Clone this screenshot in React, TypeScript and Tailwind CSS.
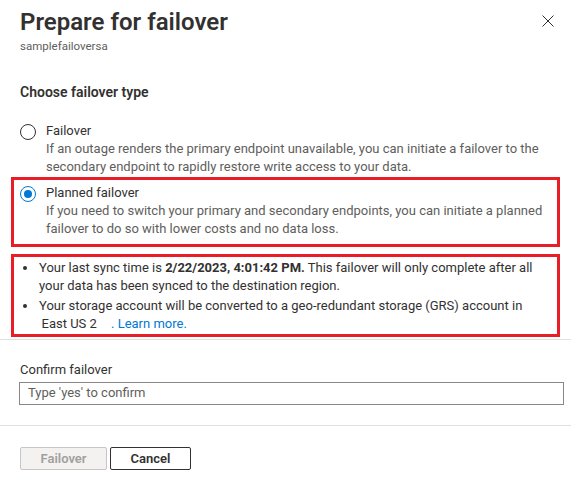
import React from "react";

function Radio({ checked }: { checked?: boolean }) {
  return checked ? (
    <div className="mt-[2px] flex size-[16px] shrink-0 items-center justify-center rounded-full border border-[#0078d4]">
      <div className="size-[8px] rounded-full bg-[#0078d4]" />
    </div>
  ) : (
    <div className="mt-[2px] size-[16px] shrink-0 rounded-full border border-[#323130]" />
  );
}

function Bullet() {
  return (
    <div className="flex w-[25px] shrink-0 justify-start pl-[9px] pt-[7px]">
      <div className="size-[4px] rounded-full bg-[#323130]" />
    </div>
  );
}

export default function App() {
  return (
    <div className="relative h-[485px] w-[571px] overflow-hidden bg-white font-['Roboto',sans-serif] text-[#323130]">
      {/* Header */}
      <div className="flex items-start justify-between pl-[20px] pt-[6px]">
        <div>
          <div className="text-[24px] font-semibold leading-[32px] text-[#323130]">Prepare for failover</div>
          <div className="text-[11.5px] leading-[16px] text-[#605e5c]">samplefailoversa</div>
        </div>
        <button className="mr-[17.5px] mt-[9px] flex size-[12px] items-center justify-center" aria-label="Close">
          <svg width="12" height="12" viewBox="0 0 12 12" fill="none">
            <path d="M0.5 0.5 L11.5 11.5 M11.5 0.5 L0.5 11.5" stroke="#323130" strokeWidth="1" />
          </svg>
        </button>
      </div>

      {/* Choose type */}
      <div className="mt-[28px] pl-[20px] text-[14px] font-semibold leading-[20px]">Choose failover type</div>

      {/* Option 1 */}
      <div className="mt-[20px] flex gap-[10px] pl-[20px] text-[13px] leading-[18px]">
        <Radio />
        <div className="whitespace-nowrap">
          <div className="text-[#323130]">Failover</div>
          <div className="text-[#605e5c]">
            If an outage renders the primary endpoint unavailable, you can initiate a failover to the
            <br />
            secondary endpoint to rapidly restore write access to your data.
          </div>
        </div>
      </div>

      {/* Option 2 (highlighted) */}
      <div className="ml-[11px] mt-[1px] w-[549px] border-[3px] border-[#e81d25] pb-[6px] pl-[6px] pt-[4px]">
        <div className="flex gap-[10px] text-[13px] leading-[18px]">
          <Radio checked />
          <div className="whitespace-nowrap">
            <div className="text-[#323130]">Planned failover</div>
            <div className="text-[#605e5c]">
              If you need to switch your primary and secondary endpoints, you can initiate a planned
              <br />
              failover to do so with lower costs and no data loss.
            </div>
          </div>
        </div>
      </div>

      {/* Notes (highlighted) */}
      <div className="ml-[11px] mt-[7px] w-[549px] border-[3px] border-[#e81d25] pb-[1.5px] pt-[2px] text-[13px] leading-[18px] text-[#323130]">
        <div className="flex whitespace-nowrap">
          <Bullet />
          <div>
            Your last sync time is <span className="font-bold">2/22/2023, 4:01:42 PM.</span> This failover will only complete after all
            <br />
            your data has been synced to the destination region.
          </div>
        </div>
        <div className="mt-[1.5px] flex whitespace-nowrap">
          <Bullet />
          <div>
            Your storage account will be converted to a geo-redundant storage (GRS) account in
            <br />
            <span className="inline-block w-[72px] pl-[2.5px]">East US 2</span>
            <a className="text-[#0078d4]" href="#">. Learn more.</a>
          </div>
        </div>
      </div>

      <div className="mt-[2px] h-px w-full bg-[#e1dfdd]" />

      {/* Confirm */}
      <div className="mt-[20.5px] pl-[20px] text-[13px] leading-[18px]">Confirm failover</div>
      <div className="ml-[19px] mt-[3px] flex h-[23px] w-[545px] items-center border border-[#8a8886] pl-[8px] text-[13px] text-[#605e5c]">
        Type 'yes' to confirm
      </div>

      <div className="mt-[20.5px] h-px w-full bg-[#e1dfdd]" />

      {/* Buttons */}
      <div className="mt-[21px] flex gap-[3px] pl-[20px]">
        <button className="flex h-[23px] w-[87px] items-center justify-center rounded-[2px] border border-[#c8c6c4] bg-[#f3f2f1] text-[13px] font-semibold text-[#a19f9d]">
          Failover
        </button>
        <button className="flex h-[23px] w-[81px] items-center justify-center rounded-[2px] border border-[#323130] bg-white text-[13px] font-semibold text-[#323130]">
          Cancel
        </button>
      </div>
    </div>
  );
}
